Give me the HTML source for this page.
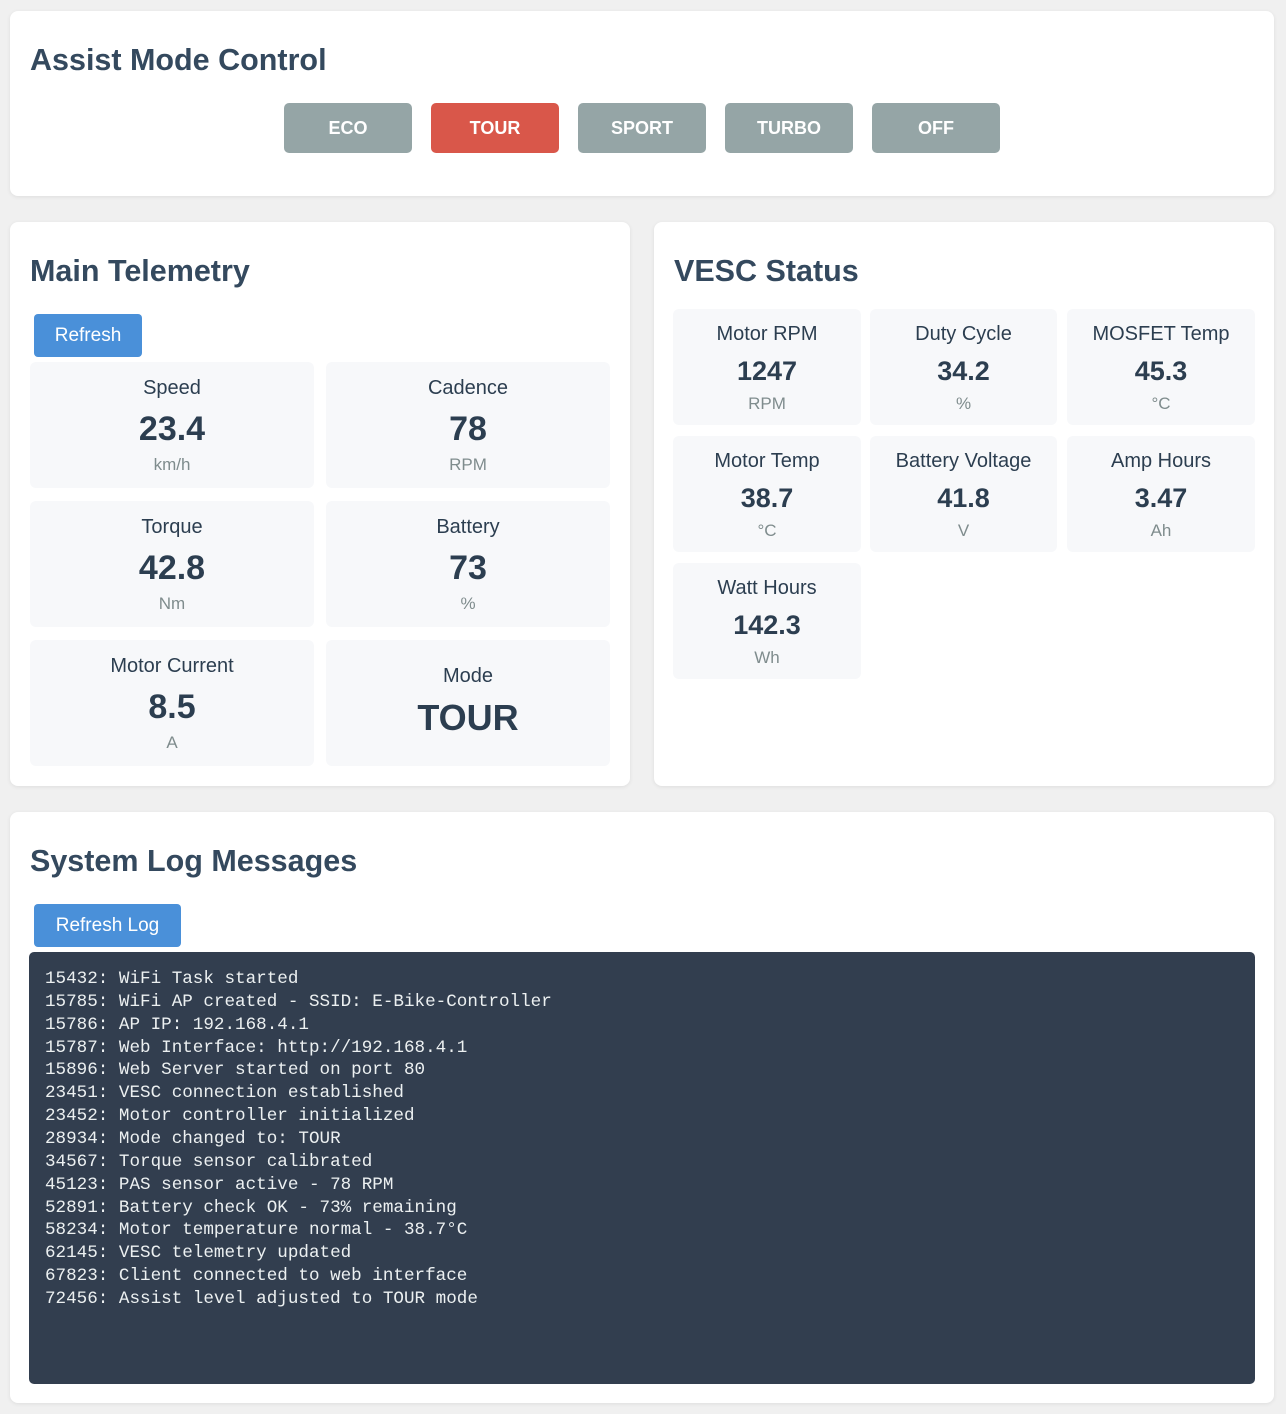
<!DOCTYPE html>
<html><head><meta charset="utf-8"><style>
*{box-sizing:border-box;margin:0;padding:0}
body{width:1286px;height:1414px;background:#f0f0f0;font-family:"Liberation Sans",Arial,sans-serif;color:#2c3e50;position:relative;overflow:hidden}
.card{position:absolute;background:#fff;border-radius:8px;box-shadow:0 1px 4px rgba(0,0,0,0.08)}
h2{position:absolute;left:20px;font-size:30.5px;font-weight:bold;color:#34495e}
.mb{position:absolute;top:92px;width:128px;height:50px;border-radius:5px;background:#95a5a6;color:#fff;font-weight:bold;font-size:18px;text-align:center;line-height:50px}
.btn{position:absolute;background:#4a90d9;color:#fff;border-radius:4px;font-size:19px;text-align:center}
.cell{position:absolute;background:#f7f8fa;border-radius:6px;text-align:center}
.cell .l{position:absolute;left:0;right:0;font-size:20px;color:#2c3e50}
.cell .v{position:absolute;left:0;right:0;font-weight:bold;color:#2c3e50}
.cell .u{position:absolute;left:0;right:0;font-size:17px;color:#7f8c8d}
.log{position:absolute;left:19px;top:140px;width:1226px;height:432px;background:#323e4f;border-radius:5px;padding:16px 16px;color:#ecf0f1;font-family:"Liberation Mono",monospace;font-size:17.6px;line-height:22.86px;white-space:pre}
</style></head><body>
<div class="card" style="left:10px;top:11px;width:1264px;height:185px">
<h2 style="top:32px">Assist Mode Control</h2>
<div class="mb" style="left:274px">ECO</div>
<div class="mb" style="left:421px;background:#d9574a">TOUR</div>
<div class="mb" style="left:568px">SPORT</div>
<div class="mb" style="left:715px">TURBO</div>
<div class="mb" style="left:862px">OFF</div>
</div>

<div class="card" style="left:10px;top:222px;width:620px;height:564px">
<h2 style="top:32px">Main Telemetry</h2>
<div class="btn" style="left:24px;top:92px;width:108px;height:43px;line-height:43px">Refresh</div>
</div>
<div style="position:absolute;left:0;top:0">
<div class="cell" style="left:30px;top:362px;width:284px;height:126px"><div class="l" style="top:15px">Speed</div><div class="v" style="top:48px;font-size:34px">23.4</div><div class="u" style="top:93px">km/h</div></div>
<div class="cell" style="left:326px;top:362px;width:284px;height:126px"><div class="l" style="top:15px">Cadence</div><div class="v" style="top:48px;font-size:34px">78</div><div class="u" style="top:93px">RPM</div></div>
<div class="cell" style="left:30px;top:501px;width:284px;height:126px"><div class="l" style="top:15px">Torque</div><div class="v" style="top:48px;font-size:34px">42.8</div><div class="u" style="top:93px">Nm</div></div>
<div class="cell" style="left:326px;top:501px;width:284px;height:126px"><div class="l" style="top:15px">Battery</div><div class="v" style="top:48px;font-size:34px">73</div><div class="u" style="top:93px">%</div></div>
<div class="cell" style="left:30px;top:640px;width:284px;height:126px"><div class="l" style="top:15px">Motor Current</div><div class="v" style="top:48px;font-size:34px">8.5</div><div class="u" style="top:93px">A</div></div>
<div class="cell" style="left:326px;top:640px;width:284px;height:126px"><div class="l" style="top:25px">Mode</div><div class="v" style="top:57px;font-size:36px">TOUR</div></div>
</div>

<div class="card" style="left:654px;top:222px;width:620px;height:564px">
<h2 style="top:32px">VESC Status</h2>
</div>
<div style="position:absolute;left:0;top:0">
<div class="cell" style="left:673px;top:309px;width:188px;height:116px"><div class="l" style="top:14px">Motor RPM</div><div class="v" style="top:47px;font-size:27px">1247</div><div class="u" style="top:85px">RPM</div></div>
<div class="cell" style="left:870px;top:309px;width:187px;height:116px"><div class="l" style="top:14px">Duty Cycle</div><div class="v" style="top:47px;font-size:27px">34.2</div><div class="u" style="top:85px">%</div></div>
<div class="cell" style="left:1067px;top:309px;width:188px;height:116px"><div class="l" style="top:14px">MOSFET Temp</div><div class="v" style="top:47px;font-size:27px">45.3</div><div class="u" style="top:85px">°C</div></div>
<div class="cell" style="left:673px;top:436px;width:188px;height:116px"><div class="l" style="top:14px">Motor Temp</div><div class="v" style="top:47px;font-size:27px">38.7</div><div class="u" style="top:85px">°C</div></div>
<div class="cell" style="left:870px;top:436px;width:187px;height:116px"><div class="l" style="top:14px">Battery Voltage</div><div class="v" style="top:47px;font-size:27px">41.8</div><div class="u" style="top:85px">V</div></div>
<div class="cell" style="left:1067px;top:436px;width:188px;height:116px"><div class="l" style="top:14px">Amp Hours</div><div class="v" style="top:47px;font-size:27px">3.47</div><div class="u" style="top:85px">Ah</div></div>
<div class="cell" style="left:673px;top:563px;width:188px;height:116px"><div class="l" style="top:14px">Watt Hours</div><div class="v" style="top:47px;font-size:27px">142.3</div><div class="u" style="top:85px">Wh</div></div>
</div>

<div class="card" style="left:10px;top:812px;width:1264px;height:591px">
<h2 style="top:32px">System Log Messages</h2>
<div class="btn" style="left:24px;top:92px;width:147px;height:43px;line-height:43px">Refresh Log</div>
<div class="log">15432: WiFi Task started
15785: WiFi AP created - SSID: E-Bike-Controller
15786: AP IP: 192.168.4.1
15787: Web Interface: http://192.168.4.1
15896: Web Server started on port 80
23451: VESC connection established
23452: Motor controller initialized
28934: Mode changed to: TOUR
34567: Torque sensor calibrated
45123: PAS sensor active - 78 RPM
52891: Battery check OK - 73% remaining
58234: Motor temperature normal - 38.7°C
62145: VESC telemetry updated
67823: Client connected to web interface
72456: Assist level adjusted to TOUR mode</div>
</div>
</body></html>
